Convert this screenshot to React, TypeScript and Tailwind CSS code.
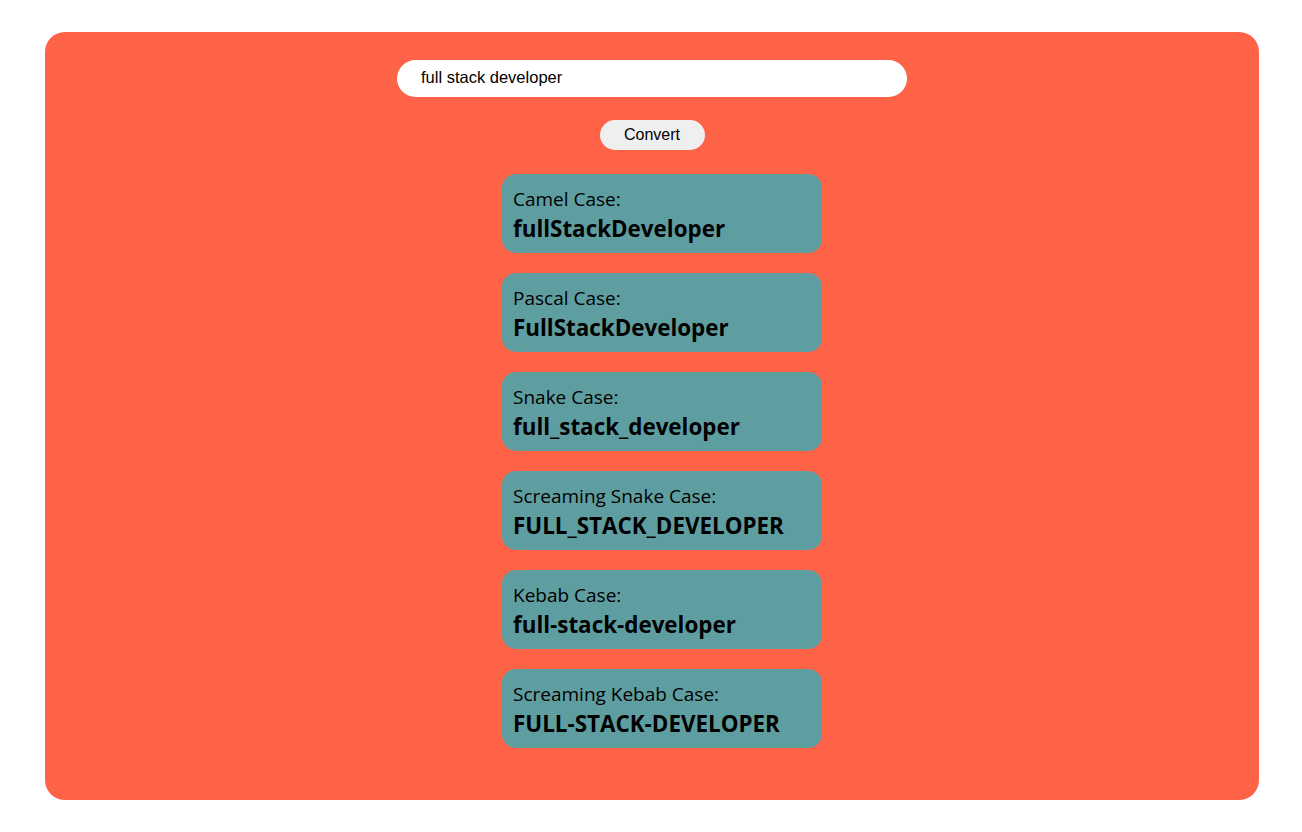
import React, { useState } from 'react'

const toWords = (s: string) => s.trim().split(/\s+/).filter(Boolean).map((w) => w.toLowerCase())

const cap = (w: string) => w.charAt(0).toUpperCase() + w.slice(1)

const convert = (s: string) => {
  const words = toWords(s)
  return [
    { label: 'Camel Case:', value: words.map((w, i) => (i === 0 ? w : cap(w))).join('') },
    { label: 'Pascal Case:', value: words.map(cap).join('') },
    { label: 'Snake Case:', value: words.join('_') },
    { label: 'Screaming Snake Case:', value: words.join('_').toUpperCase() },
    { label: 'Kebab Case:', value: words.join('-') },
    { label: 'Screaming Kebab Case:', value: words.join('-').toUpperCase() }
  ]
}

export default function App() {
  const [text, setText] = useState('full stack developer')
  const [results, setResults] = useState(convert('full stack developer'))

  return (
    <div className="min-h-screen bg-white pt-[32px] pb-[32px]">
      <div className="ml-[45px] w-[1214px] h-[768px] rounded-[20px] bg-[#ff6347] flex flex-col items-center pt-[28px]">
        <input
          value={text}
          onChange={(e) => setText(e.target.value)}
          className="w-[510px] h-[37px] rounded-full bg-white px-[24px] pb-[2px] text-[16.5px] text-black outline-none font-['Liberation_Sans',Arial,sans-serif]"
        />
        <button
          type="button"
          onClick={() => setResults(convert(text))}
          className="mt-[23px] w-[105px] h-[30px] rounded-full bg-[#efefef] text-[16px] text-black font-['Liberation_Sans',Arial,sans-serif]"
        >
          Convert
        </button>
        <div className="mt-[24px] ml-[20px] flex flex-col gap-[20px] font-['Open_Sans','Noto_Sans',sans-serif]">
          {results.map((r) => (
            <div
              key={r.label}
              className="w-[320px] h-[79px] rounded-[14px] bg-[#5f9ea0] pl-[11px] pt-[11px] text-black"
            >
              <div className="text-[19px] leading-[28px]">{r.label}</div>
              <div className="text-[22.4px] leading-[31px] font-bold">{r.value}</div>
            </div>
          ))}
        </div>
      </div>
    </div>
  )
}
